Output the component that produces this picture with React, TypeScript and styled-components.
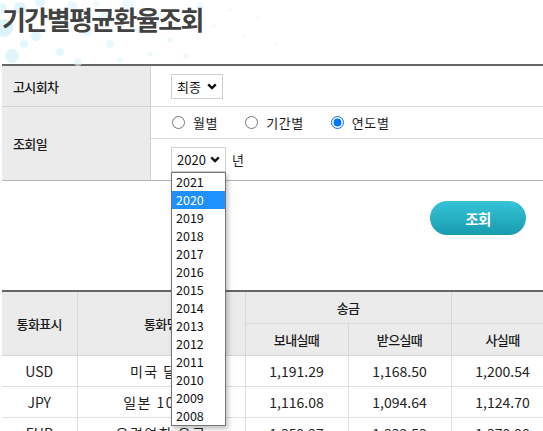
import React from 'react'
import styled, { createGlobalStyle } from 'styled-components'

const GlobalStyle = createGlobalStyle`
  html, body {
    margin: 0;
    padding: 0;
    overflow: hidden;
    background: #fff;
  }

  body {
    font-family: 'Noto Sans CJK KR', 'Noto Sans', sans-serif;
    color: #222;
  }
`

const Page = styled.div`
  width: 541px;
  padding-left: 2px;
`

const TitleBar = styled.div`
  position: relative;
  height: 64px;
  margin-left: -2px;
  padding-left: 2px;
`

const Dots = styled.svg`
  position: absolute;
  left: 0;
  top: 0;
`

const Title = styled.h2`
  position: relative;
  margin: 0;
  padding-top: 0;
  font-size: 26px;
  line-height: 38px;
  font-weight: 700;
  letter-spacing: -1.6px;
  color: #424242;
`

const FormTable = styled.div`
  display: grid;
  grid-template-columns: 149px 1fr;
  border-top: 2px solid #666;
  border-bottom: 1px solid #b5b5b5;
`

const Label = styled.div<{ $last?: boolean }>`
  display: flex;
  align-items: center;
  padding-left: 11px;
  background: #ebebeb;
  border-right: 1px solid #d2d2d2;
  border-bottom: ${({ $last }) => ($last ? 'none' : '1px solid #d2d2d2')};
  font-size: 13px;
  font-weight: 500;
  letter-spacing: -0.6px;
  color: #1a1a1a;
`

const Field = styled.div<{ $h: number; $last?: boolean }>`
  display: flex;
  align-items: center;
  height: ${({ $h }) => $h}px;
  padding-left: 20px;
  border-bottom: ${({ $last }) => ($last ? 'none' : '1px solid #dcdcdc')};
`

const FieldStack = styled.div`
  display: flex;
  flex-direction: column;
`

const SubField = styled.div<{ $h: number; $top?: number; $line?: boolean }>`
  display: flex;
  align-items: ${({ $top }) => ($top !== undefined ? 'flex-start' : 'center')};
  height: ${({ $h }) => $h}px;
  padding-top: ${({ $top }) => $top ?? 0}px;
  padding-left: 20px;
  box-sizing: border-box;
  border-bottom: ${({ $line }) => ($line ? '1px solid #dcdcdc' : 'none')};
`

const SelectWrap = styled.div`
  position: relative;
`

const SelectBox = styled.div<{ $w: number; $h: number }>`
  display: flex;
  align-items: center;
  justify-content: space-between;
  width: ${({ $w }) => $w}px;
  height: ${({ $h }) => $h}px;
  box-sizing: border-box;
  padding: 0 5px 0 5px;
  border: 1px solid #cfcfcf;
  background: #fff;
  font-size: 13px;
  color: #111;
`

const Unit = styled.span`
  margin-left: 6px;
  font-size: 13px;
  line-height: 25px;
  color: #222;
`

const RadioGroup = styled.div`
  display: flex;
  align-items: center;
  gap: 27px;
  padding-left: 1px;
`

const RadioLabel = styled.label`
  display: flex;
  align-items: center;
  gap: 8px;
  font-size: 13px;
  letter-spacing: 0.6px;
  color: #1a1a1a;

  input {
    margin: 0;
    width: 13px;
    height: 13px;
  }
`

const OptionList = styled.ul`
  position: absolute;
  left: 0;
  top: 25px;
  z-index: 10;
  width: 55px;
  box-sizing: border-box;
  margin: 0;
  padding: 0;
  list-style: none;
  background: #fff;
  border: 1px solid #767676;
  box-shadow: 2px 3px 5px rgba(0, 0, 0, 0.25);
`

const Option = styled.li<{ $on?: boolean }>`
  height: 18px;
  line-height: 18px;
  padding-left: 4px;
  font-size: 12.5px;
  color: ${({ $on }) => ($on ? '#fff' : '#111')};
  background: ${({ $on }) => ($on ? '#1e90ff' : '#fff')};
`

const ButtonBar = styled.div`
  display: flex;
  justify-content: flex-end;
  height: 109px;
  box-sizing: border-box;
  padding: 20px 17px 0 0;
`

const SearchButton = styled.button`
  width: 96px;
  height: 34px;
  border: none;
  border-radius: 17px;
  background: linear-gradient(to bottom, #36c4d8, #189bae);
  color: #fff;
  font-family: inherit;
  font-size: 14.5px;
  font-weight: 700;
  letter-spacing: -0.5px;
`

const RateTable = styled.table`
  width: 655px;
  table-layout: fixed;
  border-collapse: collapse;
  border-top: 2px solid #666;
`

const Th = styled.th`
  height: 31px;
  padding: 0;
  background: #ebebeb;
  border: 1px solid #d8d8d8;
  font-size: 13px;
  font-weight: 500;
  letter-spacing: -0.6px;
  color: #1a1a1a;

  &:first-child {
    border-left: none;
  }
`

const Td = styled.td<{ $spaced?: boolean }>`
  height: 30px;
  padding: 0;
  text-align: center;
  border: 1px solid #e0e0e0;
  font-size: 14px;
  letter-spacing: ${({ $spaced }) => ($spaced ? '1.5px' : '0')};
  color: #222;

  &:first-child {
    border-left: none;
  }
`

const Chevron = () => (
  <svg width="10" height="7" viewBox="0 0 10 7">
    <path d="M1.2 1.3 L5 5 L8.8 1.3" fill="none" stroke="#111" strokeWidth="2.4" />
  </svg>
)

const dots: [number, number, number, number][] = [
  [4, 28, 9, 0.9], [20, 8, 6, 0.8], [40, 2, 5, 0.7], [12, 56, 7, 0.8],
  [36, 36, 5, 0.8], [58, 20, 4, 0.7], [72, 6, 5, 0.6], [60, 52, 4, 0.7],
  [88, 32, 4, 0.6], [104, 16, 5, 0.6], [110, 44, 4, 0.6], [128, 4, 6, 0.5],
  [138, 30, 3, 0.6], [120, 60, 3, 0.5], [158, 16, 3, 0.5], [170, 40, 3, 0.5],
  [186, 56, 3, 0.4], [200, 6, 4, 0.4], [214, 26, 2, 0.4], [230, 10, 2, 0.4],
  [244, 36, 2, 0.35], [258, 18, 1.5, 0.35], [276, 44, 1.5, 0.3], [78, 62, 4, 0.6],
  [24, 44, 4, 0.7], [150, 54, 2.5, 0.5], [96, 4, 3, 0.5], [2, 8, 5, 0.7],
]

const years = [2021, 2020, 2019, 2018, 2017, 2016, 2015, 2014, 2013, 2012, 2011, 2010, 2009, 2008]

const rows = [
  { code: 'USD', name: '미국 달러', send: '1,191.29', recv: '1,168.50', buy: '1,200.54', sell: '1,150.34' },
  { code: 'JPY', name: '일본 100엔', send: '1,116.08', recv: '1,094.64', buy: '1,124.70', sell: '1,085.93' },
  { code: 'EUR', name: '유럽연합 유로', send: '1,359.27', recv: '1,332.53', buy: '1,370.98', sell: '1,320.82' },
]

const App = () => {
  return (
    <Page>
      <GlobalStyle />
      <TitleBar>
        <Dots width="300" height="70" viewBox="0 0 300 70">
          {dots.map(([cx, cy, r, o], i) => (
            <circle key={i} cx={cx} cy={cy} r={r} fill="#d9f3fc" opacity={o} />
          ))}
        </Dots>
        <Title>기간별평균환율조회</Title>
      </TitleBar>

      <FormTable>
        <Label>고시회차</Label>
        <Field $h={40}>
          <SelectBox $w={52} $h={25}>
            최종
            <Chevron />
          </SelectBox>
        </Field>

        <Label $last>조회일</Label>
        <FieldStack>
          <SubField $h={32} $line>
            <RadioGroup>
              <RadioLabel>
                <input type="radio" name="term" />
                월별
              </RadioLabel>
              <RadioLabel>
                <input type="radio" name="term" />
                기간별
              </RadioLabel>
              <RadioLabel>
                <input type="radio" name="term" defaultChecked />
                연도별
              </RadioLabel>
            </RadioGroup>
          </SubField>
          <SubField $h={41} $top={8}>
            <SelectWrap>
              <SelectBox $w={55} $h={25}>
                2020
                <Chevron />
              </SelectBox>
              <OptionList>
                {years.map((y) => (
                  <Option key={y} $on={y === 2020}>
                    {y}
                  </Option>
                ))}
              </OptionList>
            </SelectWrap>
            <Unit>년</Unit>
          </SubField>
        </FieldStack>
      </FormTable>

      <ButtonBar>
        <SearchButton>조회</SearchButton>
      </ButtonBar>

      <RateTable>
        <colgroup>
          <col style={{ width: 75 }} />
          <col style={{ width: 168 }} />
          <col style={{ width: 103 }} />
          <col style={{ width: 103 }} />
          <col style={{ width: 103 }} />
          <col style={{ width: 103 }} />
        </colgroup>
        <thead>
          <tr>
            <Th rowSpan={2}>통화표시</Th>
            <Th rowSpan={2}>통화명</Th>
            <Th colSpan={2}>송금</Th>
            <Th colSpan={2}>현찰</Th>
          </tr>
          <tr>
            <Th>보내실때</Th>
            <Th>받으실때</Th>
            <Th>사실때</Th>
            <Th>파실때</Th>
          </tr>
        </thead>
        <tbody>
          {rows.map((r) => (
            <tr key={r.code}>
              <Td>{r.code}</Td>
              <Td $spaced>{r.name}</Td>
              <Td>{r.send}</Td>
              <Td>{r.recv}</Td>
              <Td>{r.buy}</Td>
              <Td>{r.sell}</Td>
            </tr>
          ))}
        </tbody>
      </RateTable>
    </Page>
  )
}

export default App
